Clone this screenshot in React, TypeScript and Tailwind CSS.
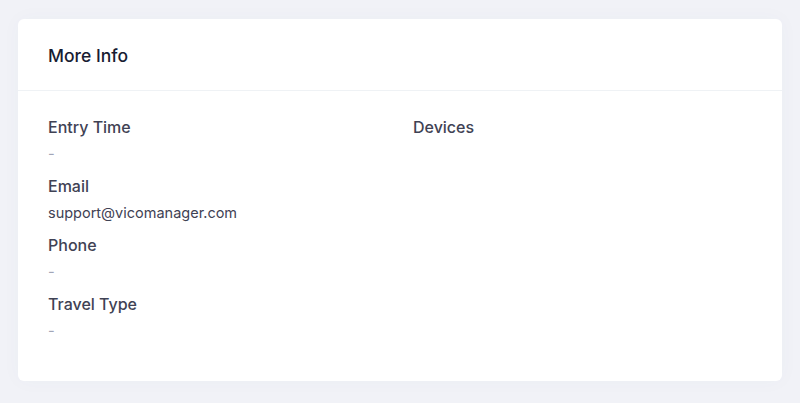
import React from "react";

const fields = [
  { label: "Entry Time", value: "-" },
  { label: "Email", value: "support@vicomanager.com" },
  { label: "Phone", value: "-" },
  { label: "Travel Type", value: "-" },
];

export default function App() {
  return (
    <div
      className="min-h-[403px] w-full bg-[#f1f2f7] pt-[19px] px-[18px] pb-[23px]"
      style={{ fontFamily: "Inter, 'Open Sans', sans-serif" }}
    >
      <div className="rounded-md bg-white shadow-[0_0_20px_0_rgba(76,87,125,0.03)]">
        <div className="flex h-[72px] items-center border-b border-[#eff2f5] px-[30px] pt-[4px]">
          <h3 className="text-[17.5px] font-medium text-[#181c32]">More Info</h3>
        </div>
        <div className="grid grid-cols-2 gap-x-[26px] px-[30px] pt-6 pb-[40px]">
          <div>
            {fields.map((f, i) => (
              <div key={f.label} className={i === fields.length - 1 ? "" : "mb-[10px]"}>
                <div className="text-[16px] leading-[24px] font-medium text-[#3f4254] mb-[5px]">
                  {f.label}
                </div>
                <div
                  className={
                    f.value === "-"
                      ? "text-[14.5px] leading-[20px] text-[#a1a5b7]"
                      : "text-[14.5px] leading-[20px] text-[#3f4254]"
                  }
                >
                  {f.value}
                </div>
              </div>
            ))}
          </div>
          <div>
            <div className="text-[16px] leading-[24px] font-medium text-[#3f4254]">Devices</div>
          </div>
        </div>
      </div>
    </div>
  );
}
